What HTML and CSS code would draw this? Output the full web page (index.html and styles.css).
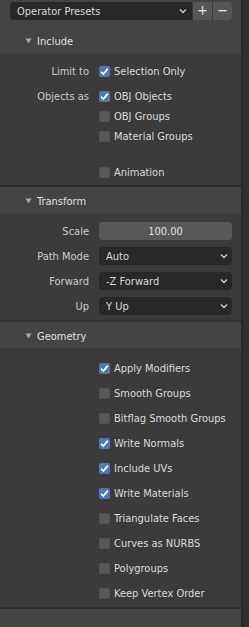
FILE: index.html
```html
<!DOCTYPE html>
<html lang="en">
<head>
    <meta charset="UTF-8">
    <title>Export OBJ</title>
    <link rel="stylesheet" href="styles.css">
</head>
<body>
    <div class="editor">
        <div class="panels">

            <!-- Include -->
            <div class="panel">
                <div class="top">
                    <div class="presets">
                        <div class="preset-menu">
                            <span>Operator Presets</span>
                            <svg class="chev" width="8" height="6" viewBox="0 0 8 6"><polyline points="1,1.5 4,4.5 7,1.5" /></svg>
                        </div>
                        <div class="preset-btn">+</div>
                        <div class="preset-btn last">&minus;</div>
                    </div>
                    <div class="panel-head">
                        <svg class="tri" width="7" height="6" viewBox="0 0 7 6"><polygon points="0.5,0.5 6.5,0.5 3.5,5.5" /></svg>
                        <span>Include</span>
                    </div>
                </div>
                <div class="panel-body include">
                    <div class="row">
                        <div class="label">Limit to</div>
                        <div class="check on"><svg width="11" height="11" viewBox="0 0 11 11"><polyline points="2.2,5.8 4.4,8 8.8,2.6" /></svg></div>
                        <div class="check-text">Selection Only</div>
                    </div>
                    <div class="group">
                        <div class="row">
                            <div class="label">Objects as</div>
                            <div class="check on"><svg width="11" height="11" viewBox="0 0 11 11"><polyline points="2.2,5.8 4.4,8 8.8,2.6" /></svg></div>
                            <div class="check-text">OBJ Objects</div>
                        </div>
                        <div class="row">
                            <div class="label"></div>
                            <div class="check"></div>
                            <div class="check-text">OBJ Groups</div>
                        </div>
                        <div class="row">
                            <div class="label"></div>
                            <div class="check"></div>
                            <div class="check-text">Material Groups</div>
                        </div>
                    </div>
                    <div class="row anim">
                        <div class="label"></div>
                        <div class="check"></div>
                        <div class="check-text">Animation</div>
                    </div>
                </div>
            </div>

            <!-- Transform -->
            <div class="panel">
                <div class="panel-head">
                    <svg class="tri" width="7" height="6" viewBox="0 0 7 6"><polygon points="0.5,0.5 6.5,0.5 3.5,5.5" /></svg>
                    <span>Transform</span>
                </div>
                <div class="panel-body rows">
                    <div class="row">
                        <div class="label">Scale</div>
                        <div class="field number">100.00</div>
                    </div>
                    <div class="row">
                        <div class="label">Path Mode</div>
                        <div class="field menu"><span>Auto</span><svg class="chev" width="8" height="6" viewBox="0 0 8 6"><polyline points="1,1.5 4,4.5 7,1.5" /></svg></div>
                    </div>
                    <div class="row">
                        <div class="label">Forward</div>
                        <div class="field menu"><span>-Z Forward</span><svg class="chev" width="8" height="6" viewBox="0 0 8 6"><polyline points="1,1.5 4,4.5 7,1.5" /></svg></div>
                    </div>
                    <div class="row">
                        <div class="label">Up</div>
                        <div class="field menu"><span>Y Up</span><svg class="chev" width="8" height="6" viewBox="0 0 8 6"><polyline points="1,1.5 4,4.5 7,1.5" /></svg></div>
                    </div>
                </div>
            </div>

            <!-- Geometry -->
            <div class="panel">
                <div class="panel-head">
                    <svg class="tri" width="7" height="6" viewBox="0 0 7 6"><polygon points="0.5,0.5 6.5,0.5 3.5,5.5" /></svg>
                    <span>Geometry</span>
                </div>
                <div class="panel-body rows geometry">
                    <div class="row"><div class="label"></div><div class="check on"><svg width="11" height="11" viewBox="0 0 11 11"><polyline points="2.2,5.8 4.4,8 8.8,2.6" /></svg></div><div class="check-text">Apply Modifiers</div></div>
                    <div class="row"><div class="label"></div><div class="check"></div><div class="check-text">Smooth Groups</div></div>
                    <div class="row"><div class="label"></div><div class="check"></div><div class="check-text">Bitflag Smooth Groups</div></div>
                    <div class="row"><div class="label"></div><div class="check on"><svg width="11" height="11" viewBox="0 0 11 11"><polyline points="2.2,5.8 4.4,8 8.8,2.6" /></svg></div><div class="check-text">Write Normals</div></div>
                    <div class="row"><div class="label"></div><div class="check on"><svg width="11" height="11" viewBox="0 0 11 11"><polyline points="2.2,5.8 4.4,8 8.8,2.6" /></svg></div><div class="check-text">Include UVs</div></div>
                    <div class="row"><div class="label"></div><div class="check on"><svg width="11" height="11" viewBox="0 0 11 11"><polyline points="2.2,5.8 4.4,8 8.8,2.6" /></svg></div><div class="check-text">Write Materials</div></div>
                    <div class="row"><div class="label"></div><div class="check"></div><div class="check-text">Triangulate Faces</div></div>
                    <div class="row"><div class="label"></div><div class="check"></div><div class="check-text">Curves as NURBS</div></div>
                    <div class="row"><div class="label"></div><div class="check"></div><div class="check-text">Polygroups</div></div>
                    <div class="row"><div class="label"></div><div class="check"></div><div class="check-text">Keep Vertex Order</div></div>
                </div>
            </div>

            <!-- next panel, cut off -->
            <div class="panel">
                <div class="panel-head stub"></div>
            </div>
        </div>
        <div class="scrollbar"></div>
    </div>
</body>
</html>
```

FILE: styles.css
```css
body {
    margin: 0;
    background-color: #2f2f2f;
    font-family: "DejaVu Sans Condensed", "DejaVu Sans", sans-serif;
    font-size: 11px;
    color: #d9d9d9;
}
.editor {
    display: flex;
    width: 249px;
    height: 627px;
    overflow: hidden;
}
.panels {
    width: 241px;
    display: flex;
    flex-direction: column;
    gap: 2px;
}
.scrollbar {
    width: 8px;
    background-color: #313131;
    border-left: 2px solid #2a2a2a;
    box-sizing: border-box;
}
.top {
    background-color: #444444;
}
.presets {
    display: flex;
    height: 27px;
    padding: 2px 0 0 10px;
    box-sizing: border-box;
}
.preset-menu {
    width: 182px;
    height: 18px;
    background-color: #282828;
    border-radius: 4px 0 0 4px;
    display: flex;
    align-items: center;
    justify-content: space-between;
    padding: 0 5px 0 7px;
    box-sizing: border-box;
    color: #d9d9d9;
}
.preset-btn {
    width: 20px;
    height: 18px;
    background-color: #565656;
    border-left: 1px solid #3a3a3a;
    box-sizing: border-box;
    text-align: center;
    line-height: 17px;
    font-size: 14px;
    color: #e6e6e6;
}
.preset-btn.last {
    border-radius: 0 4px 4px 0;
}
.chev polyline {
    fill: none;
    stroke: #d0d0d0;
    stroke-width: 1.3;
}
.panel-head {
    height: 26px;
    background-color: #444444;
    display: flex;
    align-items: center;
    padding: 3px 0 0 25px;
    box-sizing: border-box;
    color: #e0e0e0;
}
.top .panel-head {
    background: none;
}
.panel-head .tri {
    margin-right: 5px;
    margin-top: -2px;
}
.tri polygon {
    fill: #a8a8a8;
}
.panel-head.stub {
    height: 18px;
}
.panel-body {
    background-color: #3b3b3b;
}
.include {
    padding: 8px 0 3px;
}
.group {
    margin-top: 5px;
}
.anim {
    margin-top: 16px;
}
.rows {
    display: flex;
    flex-direction: column;
    gap: 5px;
    padding: 8px 0 4px;
}
.geometry {
    padding: 10px 0 4px;
}
.row {
    display: flex;
    align-items: center;
    height: 20px;
}
.label {
    width: 89px;
    margin-right: 10px;
    text-align: right;
    color: #cccccc;
    flex-shrink: 0;
}
.check {
    width: 11px;
    height: 11px;
    border-radius: 2px;
    background-color: #595959;
    box-shadow: inset 0 0 0 1px #505050;
    margin-right: 4px;
    flex-shrink: 0;
}
.check svg {
    display: block;
}
.check.on {
    background-color: #4f77b7;
    box-shadow: none;
}
.check.on polyline {
    fill: none;
    stroke: #ffffff;
    stroke-width: 1.7;
}
.check-text {
    color: #dcdcdc;
    white-space: nowrap;
}
.field {
    width: 133px;
    height: 18px;
    border-radius: 4px;
    box-sizing: border-box;
    display: flex;
    align-items: center;
}
.field.number {
    background-color: #585858;
    justify-content: center;
    color: #e0e0e0;
}
.field.menu {
    background-color: #282828;
    justify-content: space-between;
    padding: 0 4px 0 7px;
}
```
